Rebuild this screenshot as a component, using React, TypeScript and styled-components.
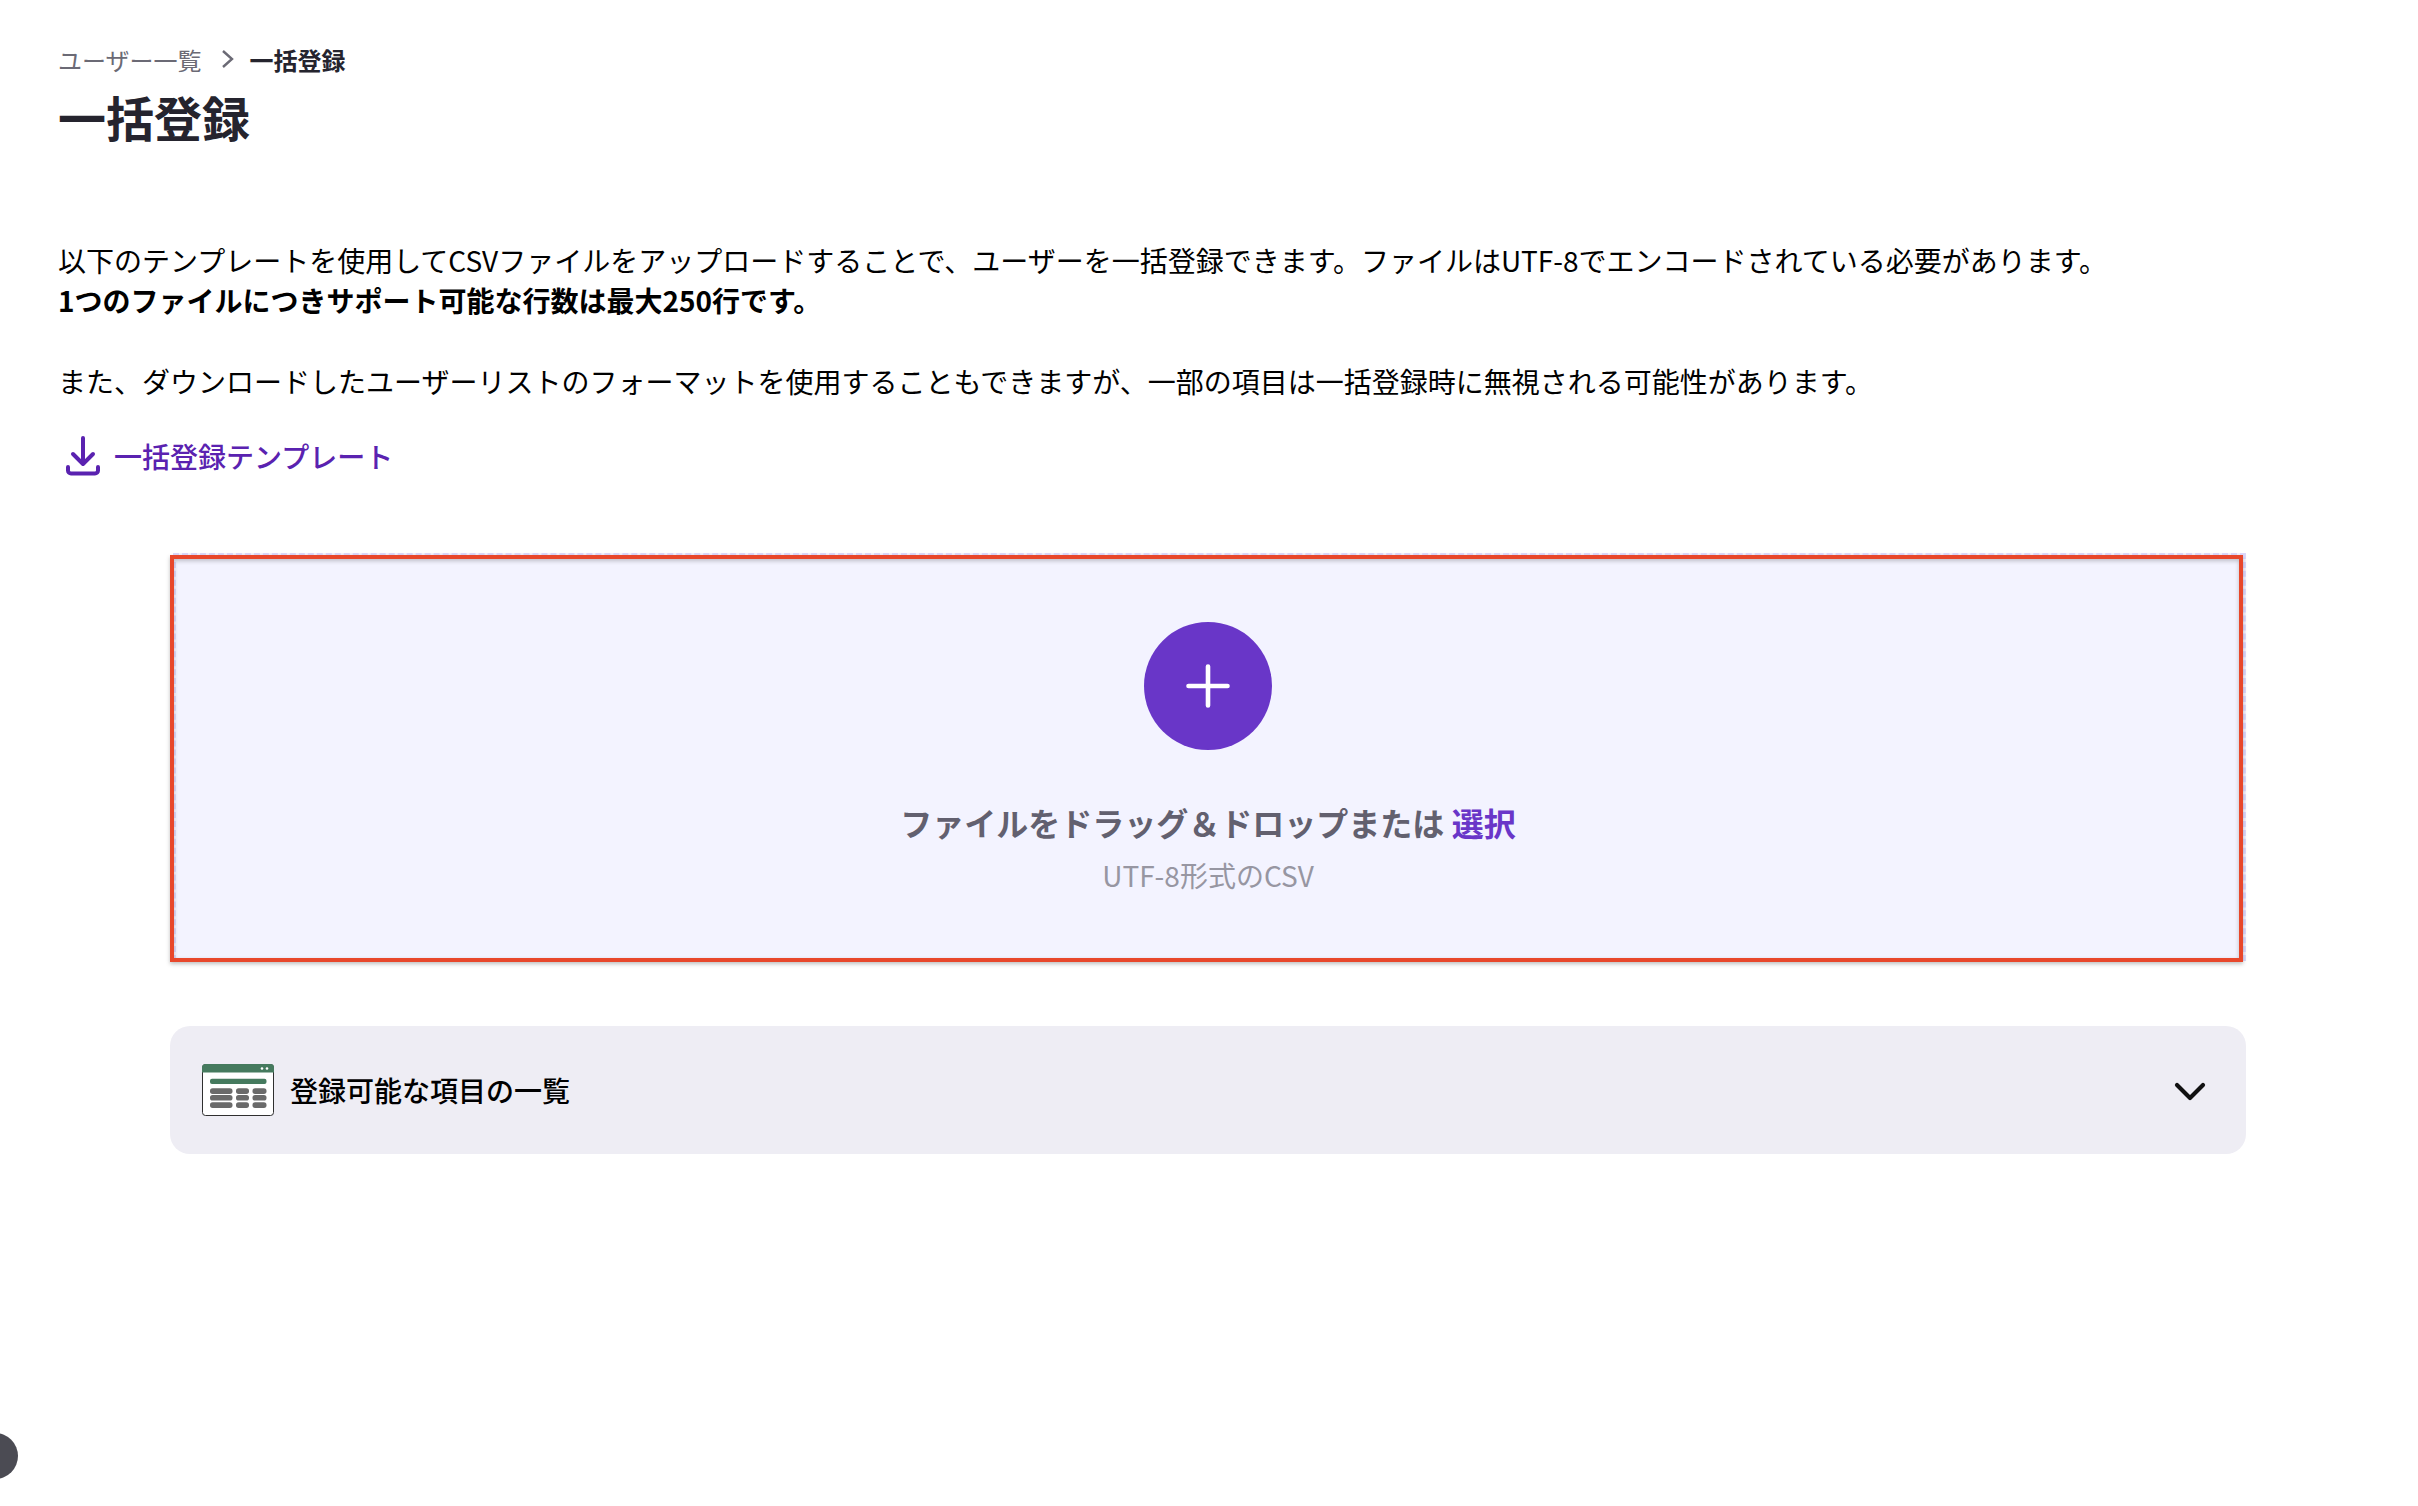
import { createGlobalStyle } from "styled-components";
import styled from "styled-components";

const GlobalStyle = createGlobalStyle`
  html, body {
    margin: 0;
    padding: 0;
    background: #fff;
  }
  body {
    font-family: "Noto Sans CJK JP", "Noto Sans", sans-serif;
    overflow: hidden;
  }
`;

const Page = styled.main`
  position: relative;
  box-sizing: border-box;
  width: 2418px;
  height: 1506px;
  padding: 39px 172px 0 58px;
  overflow: hidden;
`;

const Crumbs = styled.nav`
  display: flex;
  align-items: center;
  height: 40px;
  font-size: 24px;
`;

const CrumbLink = styled.span`
  color: #6b6a75;
`;

const CrumbCurrent = styled.span`
  color: #25242e;
  font-weight: 700;
`;

const CrumbArrow = styled.svg`
  width: 16px;
  height: 22px;
  margin: 0 14px 0 18px;
`;

const Title = styled.h1`
  margin: 0;
  height: 76px;
  line-height: 74px;
  font-size: 48px;
  font-weight: 700;
  color: #25242e;
`;

const Intro = styled.div`
  margin-top: 85px;
  font-size: 28px;
  line-height: 40px;
  color: #000;
`;

const Para = styled.p<{ $gap?: boolean; $bold?: boolean }>`
  margin: ${({ $gap }) => ($gap ? "41px" : "0")} 0 0;
  font-weight: ${({ $bold }) => ($bold ? 700 : 400)};
  white-space: nowrap;
`;

const TemplateLink = styled.a`
  display: inline-flex;
  align-items: center;
  gap: 14px;
  margin: 35px 0 0 8px;
  height: 40px;
  font-size: 28px;
  color: #5a22b0;
  font-weight: 500;
`;

const DownloadIcon = styled.svg`
  width: 34px;
  height: 40px;
`;

const Content = styled.section`
  margin: 0 0 0 112px;
  width: 2076px;
`;

const DropZone = styled.div`
  position: relative;
  box-sizing: border-box;
  width: 2073px;
  height: 408px;
  margin: 72px 0 0 3px;
  padding-top: 66px;
  display: flex;
  flex-direction: column;
  align-items: center;
  background: #f3f3ff;
  border: 3px dashed #ddd8fb;
`;

const Annotation = styled.div`
  position: absolute;
  left: -6px;
  top: -1px;
  width: 2073px;
  height: 407px;
  box-sizing: border-box;
  border: 4px solid #e8472b;
  box-shadow: 0 2px 4px rgba(0, 0, 0, 0.25), inset 0 2px 4px rgba(0, 0, 0, 0.22);
  pointer-events: none;
`;

const AddButton = styled.div`
  width: 128px;
  height: 128px;
  margin-left: -3px;
  border-radius: 50%;
  background: #6936c8;
  display: flex;
  align-items: center;
  justify-content: center;
`;

const DropText = styled.div`
  margin: 49px 0 0 -3px;
  height: 46px;
  line-height: 46px;
  font-size: 32px;
  font-weight: 700;
  color: #62606f;
`;

const Pick = styled.span`
  color: #6936c8;
`;

const DropHint = styled.div`
  margin: 10px 0 0 -3px;
  height: 40px;
  line-height: 40px;
  font-size: 28px;
  color: #9796a2;
`;

const Accordion = styled.div`
  display: flex;
  align-items: center;
  box-sizing: border-box;
  height: 128px;
  margin-top: 65px;
  padding: 0 40px 0 32px;
  border-radius: 20px;
  background: #eeedf4;
`;

const AccordionLabel = styled.span`
  flex: 1;
  margin-left: 16px;
  font-size: 28px;
  font-weight: 500;
  color: #000;
`;

const Chevron = styled.svg`
  width: 32px;
  height: 22px;
  margin-top: 4px;
`;

const Blob = styled.div`
  position: absolute;
  left: -28px;
  top: 1433px;
  width: 46px;
  height: 46px;
  border-radius: 50%;
  background: #4b4b53;
`;

const sheetColumns = [
  { x: 8, w: 22.5 },
  { x: 34, w: 13 },
  { x: 50.5, w: 14 },
];

const SheetIcon = () => (
  <svg width="72" height="52" viewBox="0 0 72 52">
    <rect x="0.5" y="0.5" width="71" height="51" rx="3" fill="#fff" stroke="#2f2f2f" />
    <path d="M0 8.5V3.5a3.5 3.5 0 0 1 3.5-3.5h65a3.5 3.5 0 0 1 3.5 3.5v5z" fill="#457a5e" />
    <circle cx="60" cy="4.5" r="1.3" fill="#fff" />
    <circle cx="65" cy="4.5" r="1.3" fill="#fff" />
    <rect x="8" y="14.7" width="56.5" height="5.3" rx="2" fill="#457a5e" />
    {[24.3, 31, 38.3].map((y) =>
      sheetColumns.map((c) => (
        <rect key={`${c.x}-${y}`} x={c.x} y={y} width={c.w} height="5.6" rx="2.6" fill="#6a6a6a" />
      ))
    )}
  </svg>
);

const App = () => {
  return (
    <>
      <GlobalStyle />
      <Page>
        <Crumbs>
          <CrumbLink>ユーザー一覧</CrumbLink>
          <CrumbArrow viewBox="0 0 16 22" fill="none" stroke="#6b6a75" strokeWidth="2.4">
            <path d="M3 3l9 8-9 8" />
          </CrumbArrow>
          <CrumbCurrent>一括登録</CrumbCurrent>
        </Crumbs>
        <Title>一括登録</Title>
        <Intro>
          <Para>以下のテンプレートを使用してCSVファイルをアップロードすることで、ユーザーを一括登録できます。ファイルはUTF-8でエンコードされている必要があります。</Para>
          <Para $bold>1つのファイルにつきサポート可能な行数は最大250行です。</Para>
          <Para $gap>また、ダウンロードしたユーザーリストのフォーマットを使用することもできますが、一部の項目は一括登録時に無視される可能性があります。</Para>
        </Intro>
        <TemplateLink>
          <DownloadIcon viewBox="0 0 34 40" fill="none" stroke="#5a22b0" strokeWidth="4" strokeLinecap="round" strokeLinejoin="round">
            <path d="M17 2v25M7 18l10 10 10-10" />
            <path d="M2 31v3.5a3 3 0 0 0 3 3h24a3 3 0 0 0 3-3V31" />
          </DownloadIcon>
          一括登録テンプレート
        </TemplateLink>
        <Content>
          <DropZone>
            <AddButton>
              <svg width="44" height="44" viewBox="0 0 44 44" stroke="#fff" strokeWidth="4.6" strokeLinecap="round">
                <path d="M22 2.5v39M2.5 22h39" />
              </svg>
            </AddButton>
            <DropText>
              ファイルをドラッグ＆ドロップまたは <Pick>選択</Pick>
            </DropText>
            <DropHint>UTF-8形式のCSV</DropHint>
            <Annotation />
          </DropZone>
          <Accordion>
            <SheetIcon />
            <AccordionLabel>登録可能な項目の一覧</AccordionLabel>
            <Chevron viewBox="0 0 32 22" fill="none" stroke="#111" strokeWidth="4.2" strokeLinecap="round" strokeLinejoin="round">
              <path d="M3 4l13 13L29 4" />
            </Chevron>
          </Accordion>
        </Content>
        <Blob />
      </Page>
    </>
  );
};

export default App;
